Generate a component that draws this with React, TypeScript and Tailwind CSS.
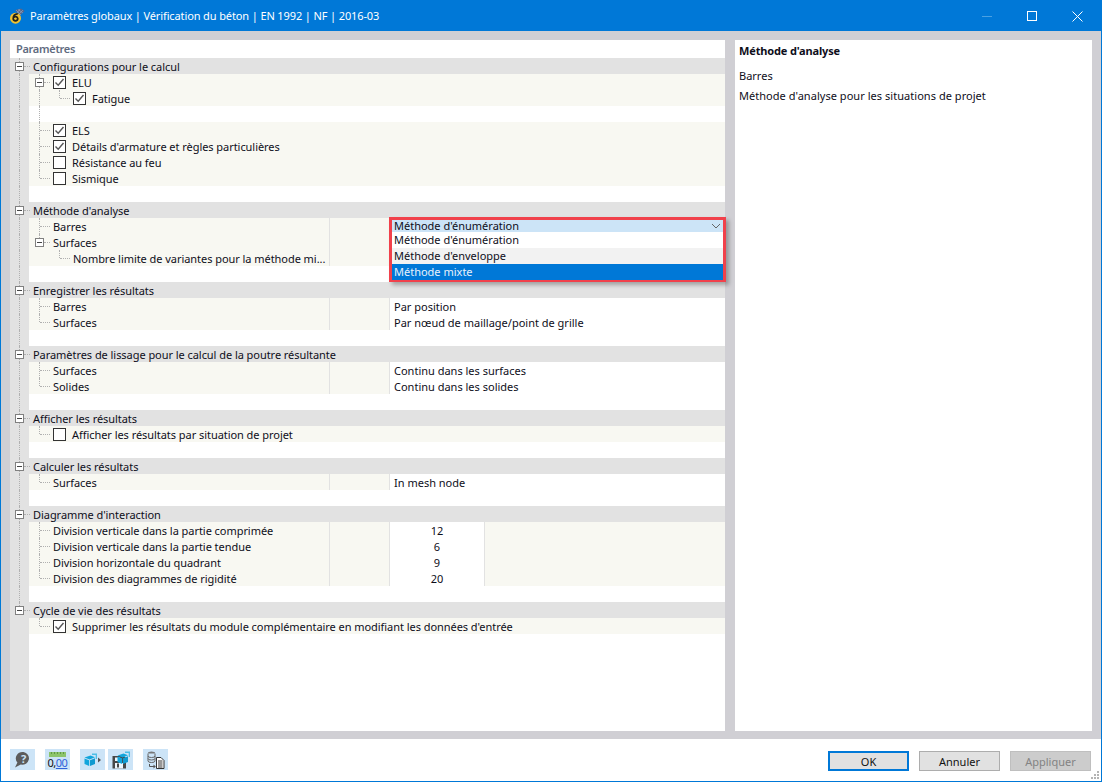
import React from "react";

const FONT = "font-['Noto_Sans','Open_Sans',sans-serif]";

type RowData = {
  kind: "section" | "child" | "blank";
  text?: string;
  level?: 1 | 2;
  check?: boolean;
  expander?: boolean;
  lastChild?: boolean;
  hasNext?: boolean; // level 1 line continues below a level 2 row
  col?: "grid" | "plain" | "number";
  value?: string;
  lastSection?: boolean;
};

const rows: RowData[] = [
  { kind: "section", text: "Configurations pour le calcul" },
  { kind: "child", text: "ELU", level: 1, check: true, expander: true, col: "plain" },
  { kind: "child", text: "Fatigue", level: 2, check: true, hasNext: true, lastChild: true, col: "plain" },
  { kind: "blank", hasNext: true },
  { kind: "child", text: "ELS", level: 1, check: true, col: "plain" },
  { kind: "child", text: "Détails d'armature et règles particulières", level: 1, check: true, col: "plain" },
  { kind: "child", text: "Résistance au feu", level: 1, check: false, col: "plain" },
  { kind: "child", text: "Sismique", level: 1, check: false, lastChild: true, col: "plain" },
  { kind: "blank" },
  { kind: "section", text: "Méthode d'analyse" },
  { kind: "child", text: "Barres", level: 1, col: "grid" },
  { kind: "child", text: "Surfaces", level: 1, expander: true, lastChild: true, col: "grid" },
  { kind: "child", text: "Nombre limite de variantes pour la méthode mi...", level: 2, lastChild: true, col: "grid" },
  { kind: "blank" },
  { kind: "section", text: "Enregistrer les résultats" },
  { kind: "child", text: "Barres", level: 1, col: "grid", value: "Par position" },
  { kind: "child", text: "Surfaces", level: 1, lastChild: true, col: "grid", value: "Par nœud de maillage/point de grille" },
  { kind: "blank" },
  { kind: "section", text: "Paramètres de lissage pour le calcul de la poutre résultante" },
  { kind: "child", text: "Surfaces", level: 1, col: "grid", value: "Continu dans les surfaces" },
  { kind: "child", text: "Solides", level: 1, lastChild: true, col: "grid", value: "Continu dans les solides" },
  { kind: "blank" },
  { kind: "section", text: "Afficher les résultats" },
  { kind: "child", text: "Afficher les résultats par situation de projet", level: 1, check: false, lastChild: true, col: "plain" },
  { kind: "blank" },
  { kind: "section", text: "Calculer les résultats" },
  { kind: "child", text: "Surfaces", level: 1, lastChild: true, col: "grid", value: "In mesh node" },
  { kind: "blank" },
  { kind: "section", text: "Diagramme d'interaction" },
  { kind: "child", text: "Division verticale dans la partie comprimée", level: 1, col: "number", value: "12" },
  { kind: "child", text: "Division verticale dans la partie tendue", level: 1, col: "number", value: "6" },
  { kind: "child", text: "Division horizontale du quadrant", level: 1, col: "number", value: "9" },
  { kind: "child", text: "Division des diagrammes de rigidité", level: 1, lastChild: true, col: "number", value: "20" },
  { kind: "blank" },
  { kind: "section", text: "Cycle de vie des résultats", lastSection: true },
  { kind: "child", text: "Supprimer les résultats du module complémentaire en modifiant les données d'entrée", level: 1, check: true, lastChild: true, col: "plain" },
];

function Expander() {
  return (
    <span className="relative z-10 flex h-[9px] w-[9px] shrink-0 items-center justify-center border border-[#808080] bg-white">
      <span className="h-px w-[5px] bg-[#444]" />
    </span>
  );
}

function CheckBox({ checked }: { checked?: boolean }) {
  return (
    <span className="relative z-10 flex h-[13px] w-[13px] shrink-0 items-center justify-center border border-[#333] bg-white">
      {checked && (
        <svg width="11" height="11" viewBox="0 0 11 11">
          <path d="M1.5 5.5 L4.2 8.2 L9.5 2" fill="none" stroke="#555" strokeWidth="1.4" />
        </svg>
      )}
    </span>
  );
}

function TreeLines({ row, index }: { row: RowData; index: number }) {
  const afterLast = index >= rows.findIndex((r) => r.lastSection);
  return (
    <>
      {/* main vertical line in the gutter */}
      {!afterLast && <span className="absolute left-[9px] top-0 h-4 border-l border-dotted border-[#b0b0b0]" />}
      {row.kind === "section" && afterLast && (
        <span className="absolute left-[9px] top-0 h-2 border-l border-dotted border-[#b0b0b0]" />
      )}
    </>
  );
}

function Row({ row, index }: { row: RowData; index: number }) {
  if (row.kind === "section") {
    return (
      <div className="relative flex h-4 items-center bg-[#e2e2e2] tracking-[-0.05px]">
        <TreeLines row={row} index={index} />
        <span className="ml-[5px]">
          <Expander />
        </span>
        <span className="mr-[3px] w-[6px] border-t border-dotted border-[#b0b0b0]" />
        <span className="pt-[2px] text-[#0e0e1a]">{row.text}</span>
      </div>
    );
  }

  if (row.kind === "blank") {
    return (
      <div className="relative flex h-4 bg-[#e2e2e2]">
        <TreeLines row={row} index={index} />
        <div className="relative ml-[19px] flex-1 bg-white">
          {row.hasNext && <span className="absolute left-[10px] top-0 h-4 border-l border-dotted border-[#b0b0b0]" />}
        </div>
      </div>
    );
  }

  const isL2 = row.level === 2;
  return (
    <div className="relative flex h-4 bg-[#e2e2e2]">
      <TreeLines row={row} index={index} />
      <div className="relative ml-[19px] flex flex-1 bg-[#f8f8f2]">
        {/* level 1 vertical */}
        {!isL2 && (
          <span
            className={
              row.lastChild
                ? "absolute left-[10px] top-0 h-2 border-l border-dotted border-[#b0b0b0]"
                : "absolute left-[10px] top-0 h-4 border-l border-dotted border-[#b0b0b0]"
            }
          />
        )}
        {isL2 && row.hasNext && (
          <span className="absolute left-[10px] top-0 h-4 border-l border-dotted border-[#b0b0b0]" />
        )}
        {/* level 2 elbow */}
        {isL2 && <span className="absolute left-[30px] top-0 h-2 border-l border-dotted border-[#b0b0b0]" />}

        <div className="flex w-[300px] shrink-0 items-center whitespace-nowrap tracking-[-0.05px]">
          {isL2 ? (
            <>
              <span className="w-[31px] shrink-0" />
              <span className="mr-[3px] w-[10px] shrink-0 border-t border-dotted border-[#b0b0b0]" />
            </>
          ) : row.expander ? (
            <>
              <span className="ml-[6px]">
                <Expander />
              </span>
              <span className="mr-[3px] w-[6px] shrink-0 border-t border-dotted border-[#b0b0b0]" />
            </>
          ) : (
            <>
              <span className="w-[11px] shrink-0" />
              <span className="mr-[3px] w-[10px] shrink-0 border-t border-dotted border-[#b0b0b0]" />
            </>
          )}
          {row.check !== undefined && (
            <span className="mr-[6px]">
              <CheckBox checked={row.check} />
            </span>
          )}
          <span className="pt-[2px] text-[#0e0e1a]">{row.text}</span>
        </div>

        {row.col === "grid" && (
          <>
            <div className="w-[61px] shrink-0 border-x border-[#e2e2e2]" />
            <div className="flex-1 bg-white pl-1 pt-px text-[#0e0e1a]">{row.value}</div>
          </>
        )}
        {row.col === "number" && (
          <>
            <div className="w-[61px] shrink-0 border-x border-[#e2e2e2]" />
            <div className="w-[95px] shrink-0 border-r border-[#e2e2e2] bg-white pt-px text-center text-[#0e0e1a]">
              {row.value}
            </div>
          </>
        )}
      </div>
    </div>
  );
}

function AppIcon() {
  return (
    <svg width="16" height="16" viewBox="0 0 16 16" className="shrink-0">
      <path d="M6 2 L12 0.5 L15.5 3 L11 7.5 Z" fill="#56668a" />
      <path d="M7 2 L12 7 M9 1.5 L14 5 M11 1 L8 5 M14 2 L10 6" stroke="#a5b5d0" strokeWidth="0.5" />
      <circle cx="6.5" cy="10.2" r="5.5" fill="#f2c230" />
      <path d="M8.8 5.8 C5.8 5.6 4.2 8 4.2 10.6 A2.3 2.3 0 1 0 8.8 10.6 A2.3 2.3 0 0 0 4.6 9.6" fill="none" stroke="#22221a" strokeWidth="1.7" />
    </svg>
  );
}

function ToolIcon({ children, className }: { children: React.ReactNode; className: string }) {
  return <div className={`flex h-[21px] w-[25px] items-center justify-center bg-[#cce4f7] ${className}`}>{children}</div>;
}

function Cube() {
  return (
    <>
      <path d="M0.5 4.5 L6.5 2.5 L11 4.2 L5.6 6.4 Z" fill="#12a5dc" />
      <path d="M0.5 5.4 L5.2 7.2 L5.2 13 L0.5 11 Z" fill="#12a5dc" />
      <path d="M6 7.2 L11 5.2 L11 11 L6 13 Z" fill="#0f9ad0" />
      <path d="M8 0.5 H13 V6 H11.7 V2 H8 Z" fill="#4dbde6" />
    </>
  );
}

export default function App() {
  return (
    <div className={`flex h-[782px] w-[1102px] flex-col overflow-hidden border border-[#0078d7] bg-white text-[11px] leading-4 ${FONT}`}>
      {/* title bar */}
      <div className="flex h-[30px] shrink-0 items-center bg-[#0078d7] pl-[8px] text-white">
        <AppIcon />
        <span className="ml-[5px] tracking-[-0.12px]">Paramètres globaux | Vérification du béton | EN 1992 | NF | 2016-03</span>
        <div className="ml-auto flex items-center pr-[18px]">
          <span className="h-px w-[10px] bg-[#4aa1e3]" />
          <span className="ml-[35px] h-[10px] w-[10px] border border-white" />
          <svg width="11" height="11" viewBox="0 0 11 11" className="ml-[35px]">
            <path d="M0.5 0.5 L10.5 10.5 M10.5 0.5 L0.5 10.5" stroke="white" strokeWidth="1" />
          </svg>
        </div>
      </div>

      {/* panels */}
      <div className="flex h-[708px] shrink-0 gap-[10px] bg-[#d0cfd4] pb-[8px] pl-[9px] pr-[9px] pt-[9px]">
        <div className="relative flex w-[715px] flex-col bg-white">
          <div className="h-[18px] pl-[6px] pt-px font-semibold tracking-[-0.3px] text-[#5f6b80]">Paramètres</div>
          {rows.map((row, i) => (
            <Row key={i} row={row} index={i} />
          ))}
          <div className="flex flex-1">
            <div className="w-[19px] bg-[#e2e2e2]" />
          </div>

          {/* open combo list */}
          <div className="absolute left-[379px] top-[177px] flex h-[65px] w-[337px] flex-col border-[3px] border-[#f1414b] shadow-[3px_3px_4px_rgba(0,0,0,0.28)]">
            <div className="flex h-[12px] items-center justify-between bg-[#cce4f7] pl-[2px] pr-[2px] text-[#0e0e1a]">
              <span>Méthode d'énumération</span>
              <svg width="10" height="6" viewBox="0 0 10 6">
                <path d="M1 1 L5 5 L9 1" fill="none" stroke="#666" strokeWidth="1" />
              </svg>
            </div>
            <div className="h-4 bg-white pl-[2px] text-[#0e0e1a]">Méthode d'énumération</div>
            <div className="h-4 bg-[#f2f2f2] pl-[2px] text-[#0e0e1a]">Méthode d'enveloppe</div>
            <div className="flex-1 bg-[#0078d7] pl-[2px] text-[#e8f2fb]">Méthode mixte</div>
          </div>
        </div>

        <div className="flex-1 bg-white pl-1 text-[#0e0e1a]">
          <div className="mt-[3px] font-bold tracking-[-0.15px]">Méthode d'analyse</div>
          <div className="mt-[9px]">Barres</div>
          <div className="mt-1 tracking-[0.04px]">Méthode d'analyse pour les situations de projet</div>
        </div>
      </div>

      {/* bottom bar */}
      <div className="relative flex flex-1 items-start pt-[10px]">
        <div className="flex pl-[9px]">
          <ToolIcon className="">
            <svg width="17" height="18" viewBox="0 0 17 18">
              <path d="M9.5 1 A6.8 6.4 0 1 1 6.8 13.6 L1 16.5 L3.4 11.4 A6.8 6.4 0 0 1 9.5 1 Z" fill="#5c5c5c" />
              <text x="9.6" y="11.5" fontSize="11" fontWeight="700" textAnchor="middle" fill="#cce4f7">?</text>
            </svg>
          </ToolIcon>
          <ToolIcon className="ml-[10px]">
            <div className="flex flex-col items-center leading-none">
              <svg width="17" height="5" viewBox="0 0 17 5" className="block">
                <rect width="17" height="5" fill="#8cc46c" />
                <path d="M2.5 0 V2 M5.5 0 V2 M8.5 0 V2 M11.5 0 V2 M14.5 0 V2" stroke="#5f9a45" />
              </svg>
              <span className="text-[11px] tracking-[-0.5px] text-[#111]">
                0,<span className="text-[#2f62d9] underline">00</span>
              </span>
            </div>
          </ToolIcon>
          <ToolIcon className="ml-[10px]">
            <svg width="18" height="14" viewBox="0 0 18 14">
              <Cube />
              <path d="M14 4.5 L17 7 L14 9.5 Z" fill="#555" />
            </svg>
          </ToolIcon>
          <ToolIcon className="ml-[3px]">
            <svg width="18" height="18" viewBox="0 0 18 18">
              <path d="M0.5 5 H12 L14 7 V17.5 H0.5 Z" fill="#474747" />
              <path d="M3 6.5 H8 V10 H3 Z" fill="#eef6fc" />
              <path d="M3 12 H11 V17.5 H3 Z" fill="#eef6fc" />
              <path d="M5 12.5 H7 V16.5 H5 Z" fill="#474747" />
              <g transform="translate(5 0)">
                <Cube />
              </g>
            </svg>
          </ToolIcon>
          <ToolIcon className="ml-[10px]">
            <svg width="18" height="18" viewBox="0 0 18 18">
              <ellipse cx="4.5" cy="2" rx="3.5" ry="1.5" fill="#777" />
              <path d="M1 2.5 V10 A3.5 1.5 0 0 0 8 10 V2.5" fill="#cce4f7" stroke="#666" />
              <path d="M1 5 A3.5 1.5 0 0 0 8 5 M1 7.5 A3.5 1.5 0 0 0 8 7.5" fill="none" stroke="#666" />
              <path d="M2.5 13 V15.5 H7.5" fill="none" stroke="#555" />
              <path d="M6.5 13.5 L8.8 15.5 L6.5 17.5 Z" fill="#555" />
              <path d="M9.5 6.5 H14 L17 9.5 V17.5 H9.5 Z" fill="white" stroke="#333" />
              <path d="M11 10 H15.5 M11 12 H15.5 M11 14 H15.5 M11 16 H15.5" stroke="#333" />
            </svg>
          </ToolIcon>
        </div>

        <div className="ml-auto flex gap-[10px] pr-[10px] pt-[2px]">
          <button className="h-5 w-[81px] border-2 border-[#0078d7] bg-[#e1e1e1] text-[11px] leading-none text-[#111]">OK</button>
          <button className="h-5 w-[81px] border border-[#adadad] bg-[#e1e1e1] text-[11px] leading-none text-[#111]">Annuler</button>
          <button className="h-5 w-[81px] border border-[#bfbfbf] bg-[#cccccc] text-[11px] leading-none text-[#838383]">Appliquer</button>
        </div>

        <svg width="8" height="8" viewBox="0 0 8 8" className="absolute bottom-[2px] right-[2px]">
          <path d="M6 0 h2 v2 h-2 Z M3 3 h2 v2 h-2 Z M6 3 h2 v2 h-2 Z M0 6 h2 v2 h-2 Z M3 6 h2 v2 h-2 Z M6 6 h2 v2 h-2 Z" fill="#b4b4b4" />
        </svg>
      </div>
    </div>
  );
}
